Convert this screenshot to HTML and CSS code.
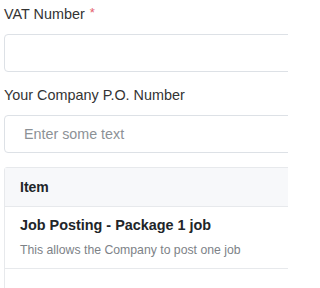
FILE: index.html
```html
<!DOCTYPE html>
<html>
<head>
<meta charset="utf-8">
<link rel="stylesheet" href="styles.css">
</head>
<body>
<div class="page">
  <div class="inner">
    <div class="field">
      <label class="label">VAT Number <span class="req">*</span></label>
      <input class="input" type="text">
    </div>
    <div class="field field-last">
      <label class="label">Your Company P.O. Number</label>
      <input class="input" type="text" placeholder="Enter some text">
    </div>
    <div class="table">
      <div class="thead">Item</div>
      <div class="row">
        <div class="title">Job Posting - Package 1 job</div>
        <div class="desc">This allows the Company to post one job</div>
      </div>
      <div class="row row-empty"></div>
    </div>
  </div>
</div>
</body>
</html>
```
FILE: styles.css
```css
html, body {
  margin: 0;
  padding: 0;
  background: #fff;
}
body {
  font-family: "Liberation Sans", Arial, sans-serif;
  color: #333;
}
.page {
  width: 288px;
  height: 288px;
  overflow: hidden;
  box-sizing: border-box;
  padding: 4px 0 0 4px;
}
.inner {
  width: 340px;
}
.field {
  margin-bottom: 13px;
}
.field-last {
  margin-bottom: 14px;
}
.label {
  display: block;
  font-size: 14.4px;
  line-height: 20px;
  margin-bottom: 10px;
  color: #333;
}
.req {
  color: #e4606d;
  font-size: 13px;
  vertical-align: top;
  position: relative;
  top: -1px;
  margin-left: 1px;
}
.input {
  display: block;
  box-sizing: border-box;
  width: 100%;
  height: 38px;
  margin: 0;
  border: 1px solid #dde1e6;
  border-radius: 4px;
  padding: 0 19px;
  font-family: "Liberation Sans", Arial, sans-serif;
  font-size: 14.3px;
  color: #333;
  outline: none;
  background: #fff;
}
.input::placeholder {
  color: #8c9196;
}
.table {
  border: 1px solid #e7e9ec;
  border-radius: 3px;
}
.thead {
  height: 38px;
  line-height: 38px;
  padding-left: 15px;
  background: #f7f8fa;
  font-weight: bold;
  font-size: 14px;
  color: #212529;
  border-bottom: 1px solid #e7e9ec;
}
.row {
  padding: 8px 15px 9px;
  border-bottom: 1px solid #e7e9ec;
}
.title {
  font-weight: bold;
  font-size: 14.4px;
  line-height: 20px;
  color: #212529;
  margin-bottom: 6px;
}
.desc {
  font-size: 12.25px;
  line-height: 18px;
  color: #7d8287;
}
.row-empty {
  height: 30px;
  border-bottom: none;
}
```
